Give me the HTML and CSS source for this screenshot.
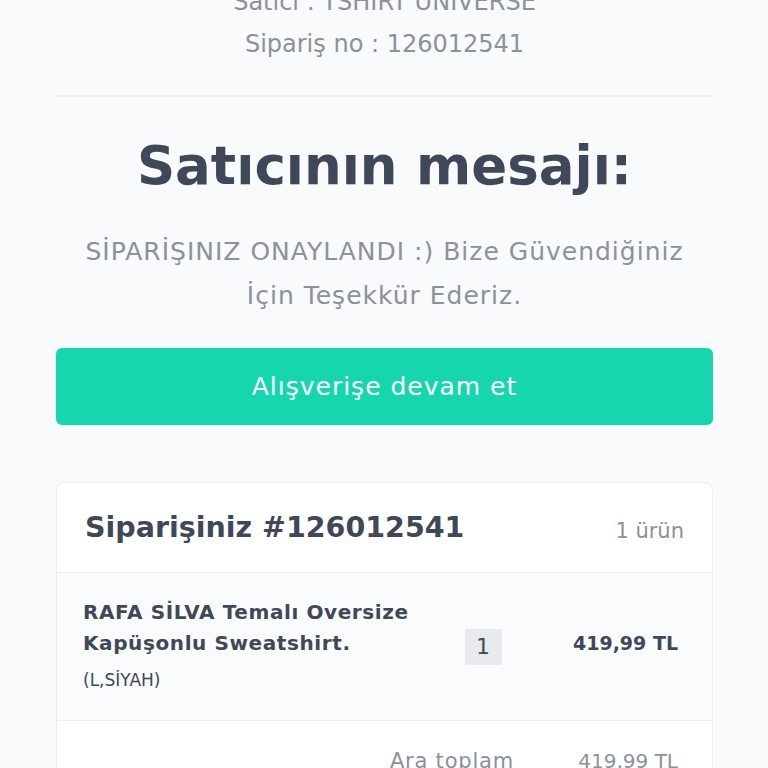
FILE: index.html
```html
<!DOCTYPE html>
<html lang="tr">
<head>
    <meta charset="UTF-8">
    <meta name="viewport" content="width=device-width, initial-scale=1.0">
    <title>Sipariş onaylandı</title>
    <link rel="stylesheet" href="styles.css">
</head>
<body>
    <div class="page">
        <div class="order-info">
            <p class="seller">Satıcı : TSHIRT UNIVERSE</p>
            <p class="order-no">Sipariş no : 126012541</p>
        </div>

        <div class="message">
            <h1>Satıcının mesajı:</h1>
            <p>SİPARİŞINIZ ONAYLANDI :) Bize Güvendiğiniz İçin Teşekkür Ederiz.</p>
        </div>

        <a class="btn" href="#">Alışverişe devam et</a>

        <div class="order-card">
            <div class="card-head">
                <h2>Siparişiniz #126012541</h2>
                <span class="count">1 ürün</span>
            </div>

            <div class="item">
                <div class="item-name">
                    <strong>RAFA SİLVA Temalı Oversize Kapüşonlu Sweatshirt.</strong>
                    <span class="variant">(L,SİYAH)</span>
                </div>
                <div class="qty"><span>1</span></div>
                <div class="price">419,99 TL</div>
            </div>

            <div class="summary">
                <div class="label">Ara toplam</div>
                <div class="price">419,99 TL</div>
            </div>
        </div>
    </div>
</body>
</html>
```

FILE: styles.css
```css
body {
    font-family: "DejaVu Sans", Verdana, sans-serif;
    background-color: #f9fafb;
    color: #3f4859;
    margin: 0;
    padding: 0;
}
p, h1, h2 {
    margin: 0;
}
.page {
    padding: 0 55px 40px 56px;
}
.order-info {
    margin-top: -19px;
    padding-bottom: 30px;
    border-bottom: 2px solid #eef0f2;
    text-align: center;
    color: #8b919d;
    font-size: 24px;
    line-height: 42px;
}
.message {
    text-align: center;
    padding-top: 34px;
}
.message h1 {
    font-size: 53px;
    font-weight: 700;
    line-height: 70px;
    color: #3f4859;
}
.message p {
    margin: 29px 12px 0;
    font-size: 25px;
    letter-spacing: 1px;
    line-height: 44px;
    color: #8b919d;
}
.btn {
    display: flex;
    align-items: center;
    justify-content: center;
    height: 77px;
    margin-top: 30px;
    background-color: #16d6ad;
    border-radius: 6px;
    color: white;
    font-size: 25px;
    letter-spacing: 1px;
    text-decoration: none;
}
.order-card {
    margin-top: 57px;
    background-color: white;
    border: 1px solid #eceef1;
    border-radius: 8px;
}
.card-head {
    display: flex;
    justify-content: space-between;
    align-items: center;
    height: 89px;
    padding: 0 28px;
    border-bottom: 1px solid #eceef1;
}
.card-head h2 {
    font-size: 28.5px;
    font-weight: 700;
}
.count {
    font-size: 21px;
    color: #8b919d;
    margin-top: 6px;
}
.item, .summary {
    display: grid;
    grid-template-columns: 1fr 80px 155px;
    align-items: center;
    padding: 0 34px 0 26px;
}
.item {
    height: 147px;
    background-color: #fafbfc;
    border-bottom: 1px solid #eceef1;
}
.item-name strong {
    display: block;
    font-size: 20px;
    font-weight: 700;
    letter-spacing: 0.6px;
    line-height: 31px;
    margin-top: -5px;
}
.variant {
    display: block;
    font-size: 17px;
    line-height: 24px;
    margin-top: 9px;
}
.qty {
    text-align: center;
}
.qty span {
    display: inline-block;
    width: 37px;
    height: 36px;
    line-height: 36px;
    background-color: #e8eaed;
    font-size: 22px;
}
.price {
    text-align: right;
    font-size: 19px;
    font-weight: 700;
}
.item .price {
    margin-bottom: 8px;
}
.summary {
    padding-top: 28px;
    padding-bottom: 28px;
}
.summary .label {
    grid-column: 1 / 3;
    text-align: right;
    padding-right: 9px;
    font-size: 21px;
    letter-spacing: 0.8px;
    color: #8b919d;
}
.summary .price {
    color: #8b919d;
    font-weight: 400;
    font-size: 20px;
}
```
